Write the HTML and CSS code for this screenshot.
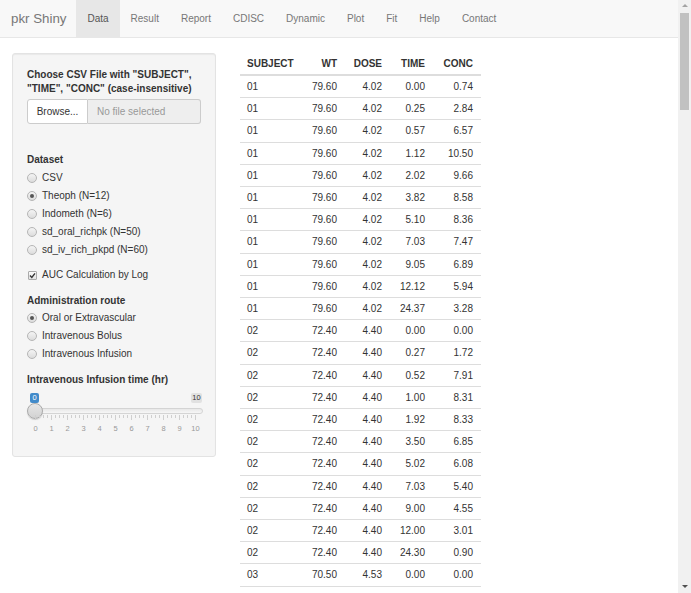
FILE: index.html
```html
<!DOCTYPE html>
<html lang="en">
<head>
<meta charset="utf-8">
<title>pkr Shiny</title>
<link rel="stylesheet" href="styles.css">
</head>
<body>
<div class="page">
  <nav class="navbar">
    <span class="brand">pkr Shiny</span>
    <ul class="nav">
      <li class="active">Data</li>
      <li>Result</li>
      <li>Report</li>
      <li>CDISC</li>
      <li>Dynamic</li>
      <li>Plot</li>
      <li>Fit</li>
      <li>Help</li>
      <li>Contact</li>
    </ul>
  </nav>
  <div class="container">
    <aside class="well">
      <div class="label two-line">Choose CSV File with "SUBJECT", "TIME", "CONC" (case-insensitive)</div>
      <div class="file-input">
        <span class="browse">Browse...</span>
        <span class="file-name">No file selected</span>
      </div>
      <div class="label dataset-label">Dataset</div>
      <div class="options">
        <div class="option"><span class="radio"></span>CSV</div>
        <div class="option"><span class="radio checked"></span>Theoph (N=12)</div>
        <div class="option"><span class="radio"></span>Indometh (N=6)</div>
        <div class="option"><span class="radio"></span>sd_oral_richpk (N=50)</div>
        <div class="option"><span class="radio"></span>sd_iv_rich_pkpd (N=60)</div>
      </div>
      <div class="option check-row"><span class="checkbox"><svg width="7" height="7" viewBox="0 0 7 7"><path d="M1 3.6 L2.8 5.4 L6 1.4" fill="none" stroke="#333" stroke-width="1.4"/></svg></span>AUC Calculation by Log</div>
      <div class="label section-label">Administration route</div>
      <div class="options">
        <div class="option"><span class="radio checked"></span>Oral or Extravascular</div>
        <div class="option"><span class="radio"></span>Intravenous Bolus</div>
        <div class="option"><span class="radio"></span>Intravenous Infusion</div>
      </div>
      <div class="label section-label">Intravenous Infusion time (hr)</div>
      <div class="slider">
        <span class="badge-from">0</span>
        <span class="badge-max">10</span>
        <span class="track"></span>
        <span class="handle"></span>
        <svg class="grid" width="180" height="22" viewBox="0 0 180 22">
          <g stroke="#cfcfcf" stroke-width="1">
            <path d="M8.5 0v5M24.5 0v5M40.5 0v5M56.5 0v5M72.5 0v5M88.5 0v5M104.5 0v5M120.5 0v5M136.5 0v5M152.5 0v5M168.5 0v5"/>
            <path d="M12.5 0v3M16.5 0v3M20.5 0v3M28.5 0v3M32.5 0v3M36.5 0v3M44.5 0v3M48.5 0v3M52.5 0v3M60.5 0v3M64.5 0v3M68.5 0v3M76.5 0v3M80.5 0v3M84.5 0v3M92.5 0v3M96.5 0v3M100.5 0v3M108.5 0v3M112.5 0v3M116.5 0v3M124.5 0v3M128.5 0v3M132.5 0v3M140.5 0v3M144.5 0v3M148.5 0v3M156.5 0v3M160.5 0v3M164.5 0v3"/>
          </g>
          <g fill="#999" font-family="Liberation Sans, Arial, sans-serif" font-size="7.5" text-anchor="middle">
            <text x="8.5" y="16">0</text><text x="24.5" y="16">1</text><text x="40.5" y="16">2</text><text x="56.5" y="16">3</text><text x="72.5" y="16">4</text><text x="88.5" y="16">5</text><text x="104.5" y="16">6</text><text x="120.5" y="16">7</text><text x="136.5" y="16">8</text><text x="152.5" y="16">9</text><text x="168.5" y="16">10</text>
          </g>
        </svg>
      </div>
    </aside>
    <main class="main">
      <table class="data-table">
        <colgroup><col class="c-subject"><col class="c-wt"><col class="c-dose"><col class="c-time"><col class="c-conc"></colgroup>
        <thead>
          <tr><th class="left">SUBJECT</th><th>WT</th><th>DOSE</th><th>TIME</th><th>CONC</th></tr>
        </thead>
        <tbody>
          <tr><td class="left">01</td><td>79.60</td><td>4.02</td><td>0.00</td><td>0.74</td></tr>
          <tr><td class="left">01</td><td>79.60</td><td>4.02</td><td>0.25</td><td>2.84</td></tr>
          <tr><td class="left">01</td><td>79.60</td><td>4.02</td><td>0.57</td><td>6.57</td></tr>
          <tr><td class="left">01</td><td>79.60</td><td>4.02</td><td>1.12</td><td>10.50</td></tr>
          <tr><td class="left">01</td><td>79.60</td><td>4.02</td><td>2.02</td><td>9.66</td></tr>
          <tr><td class="left">01</td><td>79.60</td><td>4.02</td><td>3.82</td><td>8.58</td></tr>
          <tr><td class="left">01</td><td>79.60</td><td>4.02</td><td>5.10</td><td>8.36</td></tr>
          <tr><td class="left">01</td><td>79.60</td><td>4.02</td><td>7.03</td><td>7.47</td></tr>
          <tr><td class="left">01</td><td>79.60</td><td>4.02</td><td>9.05</td><td>6.89</td></tr>
          <tr><td class="left">01</td><td>79.60</td><td>4.02</td><td>12.12</td><td>5.94</td></tr>
          <tr><td class="left">01</td><td>79.60</td><td>4.02</td><td>24.37</td><td>3.28</td></tr>
          <tr><td class="left">02</td><td>72.40</td><td>4.40</td><td>0.00</td><td>0.00</td></tr>
          <tr><td class="left">02</td><td>72.40</td><td>4.40</td><td>0.27</td><td>1.72</td></tr>
          <tr><td class="left">02</td><td>72.40</td><td>4.40</td><td>0.52</td><td>7.91</td></tr>
          <tr><td class="left">02</td><td>72.40</td><td>4.40</td><td>1.00</td><td>8.31</td></tr>
          <tr><td class="left">02</td><td>72.40</td><td>4.40</td><td>1.92</td><td>8.33</td></tr>
          <tr><td class="left">02</td><td>72.40</td><td>4.40</td><td>3.50</td><td>6.85</td></tr>
          <tr><td class="left">02</td><td>72.40</td><td>4.40</td><td>5.02</td><td>6.08</td></tr>
          <tr><td class="left">02</td><td>72.40</td><td>4.40</td><td>7.03</td><td>5.40</td></tr>
          <tr><td class="left">02</td><td>72.40</td><td>4.40</td><td>9.00</td><td>4.55</td></tr>
          <tr><td class="left">02</td><td>72.40</td><td>4.40</td><td>12.00</td><td>3.01</td></tr>
          <tr><td class="left">02</td><td>72.40</td><td>4.40</td><td>24.30</td><td>0.90</td></tr>
          <tr class="last"><td class="left">03</td><td>70.50</td><td>4.53</td><td>0.00</td><td>0.00</td></tr>
        </tbody>
      </table>
    </main>
  </div>
</div>
<div class="scrollbar">
  <span class="arrow-up"></span>
  <span class="thumb"></span>
  <span class="arrow-down"></span>
</div>
</body>
</html>
```
FILE: styles.css
```css
html, body {
  margin: 0;
  padding: 0;
  height: 100%;
  overflow: hidden;
  background: #fff;
}
body {
  font-family: "Liberation Sans", Arial, sans-serif;
  font-size: 10px;
  color: #333;
}
.page {
  margin-right: 13px;
}
.navbar {
  display: flex;
  align-items: stretch;
  height: 37px;
  background: #f8f8f8;
  border-bottom: 1px solid #e7e7e7;
}
.brand {
  font-size: 13.3px;
  line-height: 37px;
  color: #777;
  padding: 0 10px 0 11px;
}
.nav {
  display: flex;
  list-style: none;
  margin: 0;
  padding: 0;
}
.nav li {
  padding: 0 11px;
  line-height: 37px;
  color: #777;
  font-size: 10px;
}
.nav li.active {
  background: #e7e7e7;
  color: #555;
}
.container {
  display: flex;
  align-items: flex-start;
  gap: 24px;
  padding: 0 12px;
  margin-top: 15px;
}
.well {
  box-sizing: border-box;
  width: 204px;
  height: 404px;
  flex: none;
  padding: 14px;
  background: #f5f5f5;
  border: 1px solid #e3e3e3;
  border-radius: 3px;
  box-shadow: inset 0 1px 1px rgba(0,0,0,0.05);
}
.label {
  font-weight: bold;
  line-height: 14px;
}
.two-line {
  margin-bottom: 3px;
}
.file-input {
  display: flex;
  height: 25px;
  box-sizing: border-box;
}
.browse {
  box-sizing: border-box;
  width: 61px;
  background: #fff;
  border: 1px solid #ccc;
  border-radius: 3px 0 0 3px;
  line-height: 23px;
  text-align: center;
  color: #333;
}
.file-name {
  flex: 1;
  box-sizing: border-box;
  background: #eee;
  border: 1px solid #ccc;
  border-left: none;
  border-radius: 0 3px 3px 0;
  line-height: 23px;
  padding-left: 9px;
  color: #999;
}
.dataset-label {
  margin-top: 29px;
  margin-bottom: 2px;
}
.option {
  display: flex;
  align-items: center;
  height: 18px;
  line-height: 18px;
}
.radio {
  box-sizing: border-box;
  width: 10px;
  height: 10px;
  margin: 0 5px 0 0;
  border-radius: 50%;
  border: 1px solid #b5b5b5;
  background: linear-gradient(#f4f4f4, #dcdcdc);
  display: flex;
  align-items: center;
  justify-content: center;
  flex: none;
}
.radio.checked::after {
  content: "";
  width: 4px;
  height: 4px;
  border-radius: 50%;
  background: #555;
}
.check-row {
  margin-top: 7px;
}
.checkbox {
  box-sizing: border-box;
  width: 9px;
  height: 9px;
  margin: 0 5px 0 1px;
  border: 1px solid #aaa;
  border-radius: 1px;
  background: linear-gradient(#fafafa, #e2e2e2);
  display: flex;
  align-items: center;
  justify-content: center;
  flex: none;
}
.section-label {
  margin-top: 10px;
  margin-bottom: 1px;
}
.slider {
  position: relative;
  height: 55px;
}
.badge-from, .badge-max {
  position: absolute;
  top: 5px;
  height: 10px;
  line-height: 10px;
  font-size: 7.5px;
  border-radius: 2px;
  text-align: center;
}
.badge-from {
  left: 3px;
  width: 9px;
  background: #428bca;
  color: #fff;
}
.badge-max {
  left: 164px;
  width: 11px;
  background: #e1e1e1;
  color: #333;
}
.track {
  position: absolute;
  left: 7px;
  top: 20px;
  width: 169px;
  height: 6px;
  box-sizing: border-box;
  border: 1px solid #d4d4d4;
  border-radius: 3px;
  background: linear-gradient(#e8e8e8, #f6f6f6);
}
.handle {
  position: absolute;
  left: 0;
  top: 15px;
  width: 16px;
  height: 16px;
  box-sizing: border-box;
  border-radius: 50%;
  border: 1px solid #aaa;
  background: linear-gradient(#e6e6e6, #d2d2d2);
  box-shadow: 0 1px 1px rgba(0,0,0,0.15);
}
.grid {
  position: absolute;
  left: 0;
  top: 27px;
}
.main {
  flex: none;
}
.data-table {
  border-collapse: collapse;
  table-layout: fixed;
  width: 241px;
}
.c-subject { width: 60px; }
.c-wt { width: 45px; }
.c-dose { width: 45px; }
.c-time { width: 43px; }
.c-conc { width: 48px; }
.data-table th, .data-table td {
  padding: 0 8px;
  text-align: right;
  white-space: nowrap;
}
.data-table th {
  font-weight: bold;
  height: 21px;
  line-height: 21px;
  border-bottom: 2px solid #ddd;
}
.data-table td {
  height: 21.2px;
  line-height: 21.2px;
  border-top: 1px solid #ddd;
}
.data-table tr.last td {
  border-bottom: 1px solid #ddd;
}
.data-table .left {
  text-align: left;
  padding-left: 7px;
}
.scrollbar {
  position: fixed;
  top: 0;
  right: 0;
  width: 13px;
  height: 100%;
  background: #f1f1f1;
}
.thumb {
  position: absolute;
  left: 2px;
  right: 2px;
  top: 13px;
  height: 97px;
  background: #c1c1c1;
}
.arrow-up, .arrow-down {
  position: absolute;
  left: 4px;
  width: 0;
  height: 0;
  border-left: 3px solid transparent;
  border-right: 3px solid transparent;
}
.arrow-up {
  top: 4px;
  border-bottom: 3px solid #a3a3a3;
}
.arrow-down {
  bottom: 5px;
  border-top: 3px solid #505050;
}
```
